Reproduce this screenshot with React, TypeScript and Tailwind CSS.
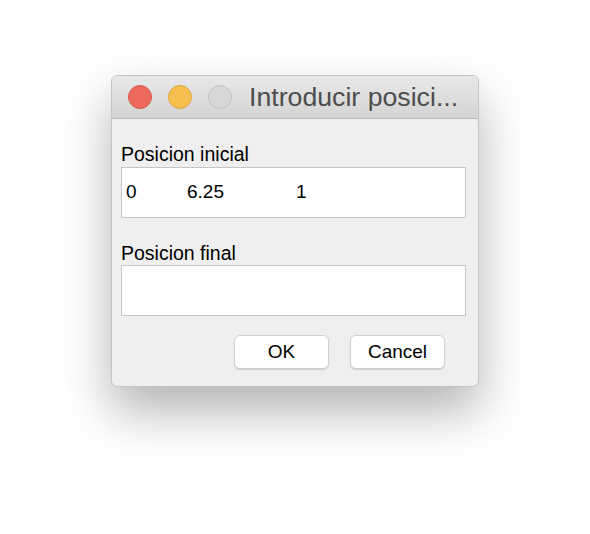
export default function App() {
  return (
    <div
      className="w-[590px] h-[534px] bg-white pl-[111px] pt-[75px]"
      style={{ fontFamily: '"Liberation Sans", Arial, sans-serif' }}
    >
      <div className="w-[368px] h-[312px] rounded-[6px] border border-[#c4c4c4] bg-[#efefef] shadow-[0_24px_50px_rgba(0,0,0,0.3)] overflow-hidden flex flex-col">
        <div className="h-[43px] shrink-0 flex items-center bg-gradient-to-b from-[#e9e9e9] to-[#d4d4d4] border-b border-[#b9b9b9] pl-[16px]">
          <div className="flex items-center gap-[16px]">
            <span className="w-[24px] h-[24px] rounded-full bg-[#ee6a5f] border border-[#d5574c]" />
            <span className="w-[24px] h-[24px] rounded-full bg-[#f6be4f] border border-[#dea53c]" />
            <span className="w-[24px] h-[24px] rounded-full bg-[#d7d7d7] border border-[#c2c2c2]" />
          </div>
          <span className="ml-[17px] text-[26.7px] text-[#4d4d4d] leading-none whitespace-nowrap">
            Introducir posici...
          </span>
        </div>
        <div className="flex flex-col px-[9px] pt-[24px]">
          <label className="text-[19.5px] leading-[22px] text-black">Posicion inicial</label>
          <div className="mt-[2px] h-[51px] w-[345px] bg-white border border-[#c6c6c6] flex items-center pl-[4px] text-[19px] text-black">
            <span className="w-[61px]">0</span>
            <span className="w-[109px]">6.25</span>
            <span>1</span>
          </div>
          <label className="mt-[24px] text-[19.5px] leading-[22px] text-black">Posicion final</label>
          <div className="mt-[1px] h-[51px] w-[345px] bg-white border border-[#c6c6c6]" />
          <div className="mt-[19px] flex justify-end gap-[21px] pr-[24px]">
            <button className="w-[95px] h-[34px] rounded-[6px] bg-white border border-[#d0d0d0] shadow-[0_1px_1px_rgba(0,0,0,0.15)] text-[19px] text-black">
              OK
            </button>
            <button className="w-[95px] h-[34px] rounded-[6px] bg-white border border-[#d0d0d0] shadow-[0_1px_1px_rgba(0,0,0,0.15)] text-[19px] text-black">
              Cancel
            </button>
          </div>
        </div>
      </div>
    </div>
  );
}
